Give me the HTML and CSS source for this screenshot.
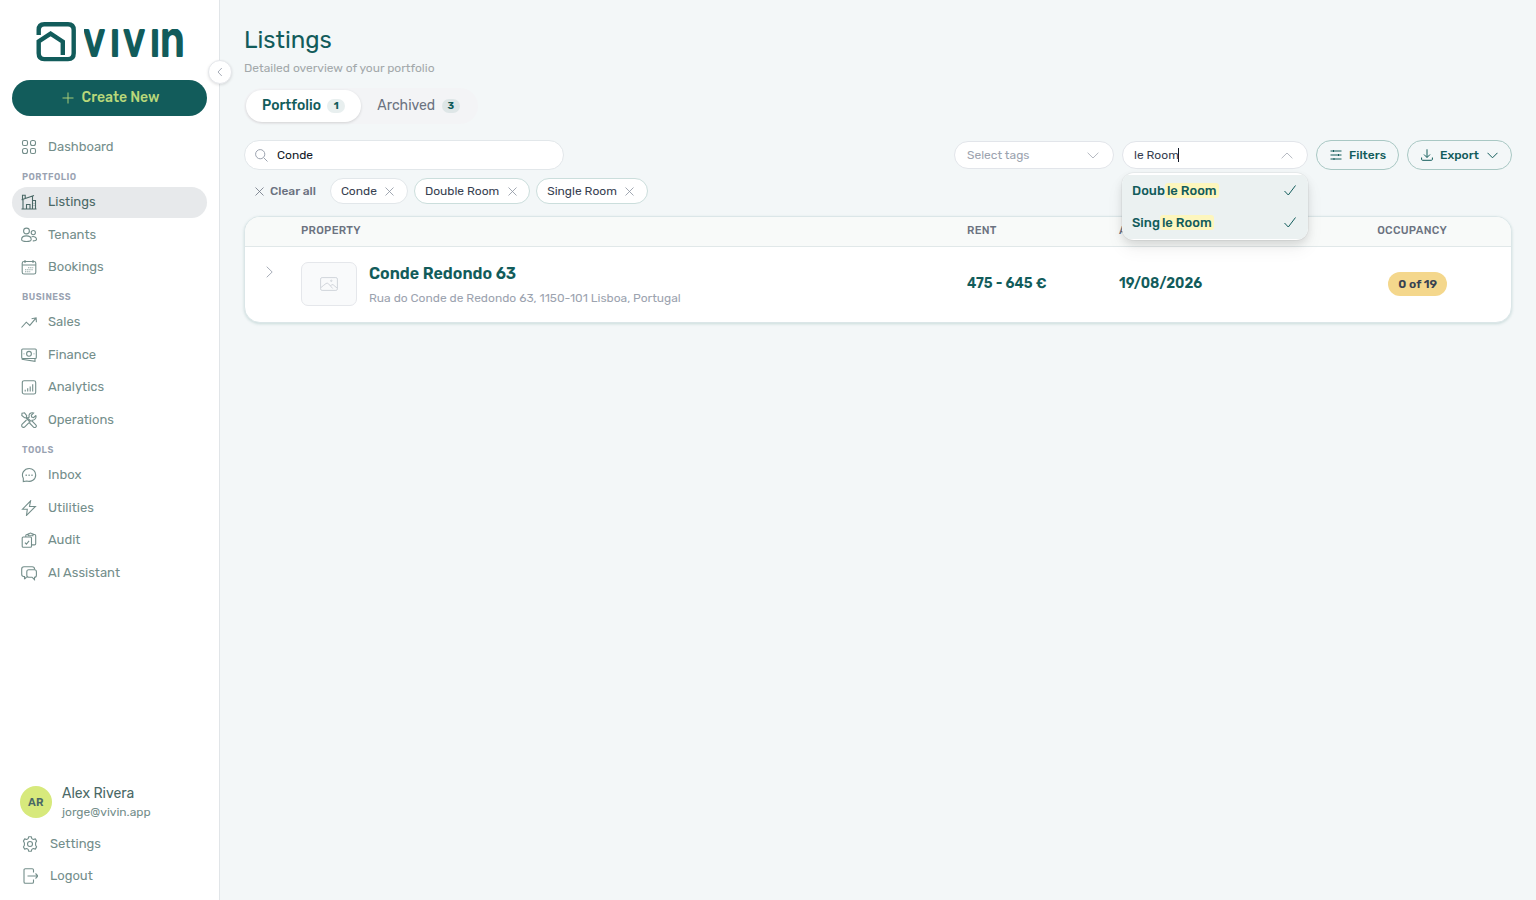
FILE: index.html
```html
<!DOCTYPE html>
<html lang="en">
<head>
<meta charset="utf-8">
<title>Listings</title>
<link rel="stylesheet" href="styles.css">
</head>
<body>
<div class="app">
  <aside class="sidebar">
    <button class="collapse" aria-label="Collapse"><svg width="8" height="10" viewBox="0 0 8 10"><path d="M5.8 1 2 5l3.800 4"/></svg></button>
    <div class="logo">
      <svg class="mark" width="42" height="42" viewBox="0 0 42 42"><path d="M2.700 14V9Q2.700 3.200 8.300 3.200H32Q37.700 3.200 37.700 9V32.300Q37.700 38.100 32 38.100H8.300Q2.700 38.100 2.700 32.300V20.500L14.600 12.700 26.800 20.700V34"/></svg>
      <svg class="wordmark" width="102" height="28" viewBox="0 0 102 28"><text x="-1.900 34.500 52.200 88.500 102.500" y="28" transform="scale(.74 1)">vivin</text></svg>
    </div>
    <button class="create"><svg width="12" height="12" viewBox="0 0 12 12"><path d="M6 .5v11M.5 6h11"/></svg>Create New</button>
    <nav class="nav">
      <a class="item"><svg viewBox="0 0 16 16"><rect x="1.500" y="1.500" width="5" height="5" rx="1.500"/><rect x="9.500" y="1.500" width="5" height="5" rx="2"/><rect x="1.500" y="9.500" width="5" height="5" rx="2"/><rect x="9.500" y="9.500" width="5" height="5" rx="1.500"/></svg>Dashboard</a>
      <div class="label">Portfolio</div>
      <a class="item active"><svg viewBox="0 0 16 16"><path d="M.5 15h15M2 15V5.500M.6 5.800 13 1.500M1.500 5V1.300h2.700v3M11.500 15V2.500M11.500 6.500h3V15M5.500 15v-4.500h3.500V15M13 9v.5M13 11.500v.5"/></svg>Listings</a>
      <a class="item"><svg viewBox="0 0 16 16"><circle cx="5.500" cy="4" r="2.900"/><circle cx="12.300" cy="5.600" r="2.100"/><path d="M.6 12.500C.6 10.300 2.800 8.900 5.400 8.900s4.800 1.400 4.800 3.600c0 1.300-2.100 2-4.800 2s-4.800-.7-4.800-2ZM10.600 9.800c2.400-1 4.900.6 4.900 2.500 0 1-1.500 1.700-3.700 1.600"/></svg>Tenants</a>
      <a class="item"><svg viewBox="0 0 16 16"><rect x="1.200" y="2.500" width="13.600" height="12.500" rx="1.800"/><path d="M1.200 6h13.600M4 1v3M12 1v3"/><path stroke-dasharray="1.100 1" d="M7.200 8.800h5M4.200 10.800h7.500M4.200 12.800h5"/></svg>Bookings</a>
      <div class="label">Business</div>
      <a class="item"><svg viewBox="0 0 16 16"><path d="M.5 13.500 5.300 8.200l3.500 3.200 5.900-7M10.600 4.700l4.500-.9.300 4.500"/></svg>Sales</a>
      <a class="item"><svg viewBox="0 0 16 16"><rect x=".7" y="2" width="14.600" height="9.500" rx="1"/><circle cx="8" cy="6.800" r="2.400"/><path d="M3 6.500v.7M13 6.500v.7M.7 12.300l13.300 2v-2.500"/></svg>Finance</a>
      <a class="item"><svg viewBox="0 0 16 16"><rect x="1.300" y="1.700" width="13.400" height="13.300" rx="1.800"/><path d="M4.200 12.500v-1.800M6.700 12.500V9.300M9.200 12.500V7.600M11.700 12.500V5.200"/></svg>Analytics</a>
      <a class="item"><svg viewBox="0 0 16 16"><path d="M1 1.200 3.500.8l2.200 2.800-.3 1.200 4.200 4.200 1.300-.1 3.900 3.900a1.600 1.600 0 0 1-2.300 2.300L8.700 11.200l.1-1.300-4.200-4.300-1.100.1L.8 3.500ZM14.900 3.300l-2.300 2.300-1.900-.5-.4-1.800L12.600 1c-2.700-1-5.300 1.100-4.400 4L6.900 6.300M5.500 8 1.200 12.200a1.800 1.800 0 0 0 2.600 2.600L8 10.600M10.700 8.100c2.800.6 4.900-1.900 4.200-4.800"/></svg>Operations</a>
      <div class="label">Tools</div>
      <a class="item"><svg viewBox="0 0 16 16"><path d="M2.300 14.600v-3.400C-.2 6.500 3.200 1.500 8.200 1.500c3.700 0 6.500 2.900 6.500 6.400 0 4.700-4.600 7.500-8.900 6.100Z"/><path stroke-width="1.400" d="M4.600 8.200h1.200M7.500 8.200h1.200M10.400 8.200h1.200"/></svg>Inbox</a>
      <a class="item"><svg viewBox="0 0 16 16"><path d="M9.600.8 1.500 9.200h4.800l-.8 6.200L14.400 6.500H8.500Z"/></svg>Utilities</a>
      <a class="item"><svg viewBox="0 0 16 16"><rect x="1.200" y="5" width="9.300" height="10.300" rx="1"/><path d="m3.900 10.600 1.500 1.500 2.700-3.200M4.800 5V3.500q0-1 1-1h1.400M12 2.500h1.500q1.200 0 1.200 1.200v8q0 1.200-1.200 1.200h-3M7.200 3.700v-1.900h1.200q1.100-1.500 2.200 0h1.300v1.900Z"/></svg>Audit</a>
      <a class="item"><svg viewBox="0 0 16 16"><path d="M3.500 14.200V11.500H2.700Q.7 11.500.7 9.300V4Q.7 1.700 3 1.700h8.200q2.300 0 2.500 2.800M3.500 14.200 5.600 12"/><path d="M7.800 4.700h5.600q2 0 2 2v3.500q0 2-1.900 2v2.500L11 12.200H7.800q-2 0-2-2V6.700q0-2 2-2Z"/></svg>AI Assistant</a>
    </nav>
    <div class="account">
      <div class="user">
        <div class="avatar">AR</div>
        <div><div class="name">Alex Rivera</div><div class="email">jorge@vivin.app</div></div>
      </div>
      <a class="item"><svg viewBox="0 0 16 16"><circle cx="8" cy="8" r="2.500"/><path d="M6.700.7h2.600l.5 1.900 1.500.9 2-.6 1.300 2.200-1 1.700v2.400l1 1.700-1.300 2.200-2-.6-1.500.9-.5 1.900H6.700l-.5-1.900-1.500-.9-2 .6L1.400 11l1-1.700V6.900l-1-1.800L2.700 2.900l2 .6 1.500-.9Z" stroke-linejoin="round"/></svg>Settings</a>
      <a class="item"><svg viewBox="0 0 16 16"><path d="M11.500 4.500V2q0-1.300-1.300-1.300H3.300Q2 .7 2 2v12q0 1.300 1.300 1.300h6.900q1.300 0 1.300-1.300v-2.500M5.500 8h10.300M13.500 5.500 16 8l-2.500 2.500"/></svg>Logout</a>
    </div>
  </aside>

  <main class="main">
    <h1>Listings</h1>
    <p class="sub">Detailed overview of your portfolio</p>
    <div class="tabs">
      <div class="tab on">Portfolio<span class="count">1</span></div>
      <div class="tab">Archived<span class="count">3</span></div>
    </div>
    <div class="toolbar">
      <div class="search"><svg width="13" height="13" viewBox="0 0 13 13"><circle cx="5.200" cy="5.200" r="4.600"/><path d="m8.600 8.600 3.900 3.900"/></svg>Conde</div>
      <div class="select tags"><span>Select tags</span><svg width="12" height="7" viewBox="0 0 12 7"><path d="m.6.700 5.400 5.300L11.400.7"/></svg></div>
      <div class="select rooms">
        <span class="typed">le Room</span><svg width="12" height="7" viewBox="0 0 12 7"><path d="M.6 6.300 6 1l5.400 5.300"/></svg>
        <div class="menu">
          <div class="option"><span>Doub</span><mark>le Room</mark><svg width="12" height="11" viewBox="0 0 12 11"><path d="M.5 6 4.300 10 11.500.5"/></svg></div>
          <div class="option"><span>Sing</span><mark>le Room</mark><svg width="12" height="11" viewBox="0 0 12 11"><path d="M.5 6 4.300 10 11.500.5"/></svg></div>
        </div>
      </div>
      <button class="btn filters"><svg width="12" height="12" viewBox="0 0 12 12"><path d="M.5 2h11M.5 6h11M.5 10h11M3.500 1v2M8.500 5v2M4 9v2"/></svg>Filters</button>
      <button class="btn export"><svg width="12" height="12" viewBox="0 0 12 12"><path d="M6 .3v8M3 5.500l3 3 3-3M.6 8.500v1.800q0 1 1 1h8.800q1 0 1-1V8.500"/></svg>Export<svg class="chev" width="11" height="7" viewBox="0 0 11 7"><path d="m.5.800 5 5 5-5"/></svg></button>
    </div>
    <div class="chips">
      <div class="clear"><svg class="x" viewBox="0 0 9 9"><path d="m.5.500 8 8m0-8-8 8"/></svg>Clear all</div>
      <div class="chip plain">Conde<svg class="x" viewBox="0 0 9 9"><path d="m.5.500 8 8m0-8-8 8"/></svg></div>
      <div class="chip">Double Room<svg class="x" viewBox="0 0 9 9"><path d="m.5.500 8 8m0-8-8 8"/></svg></div>
      <div class="chip">Single Room<svg class="x" viewBox="0 0 9 9"><path d="m.5.500 8 8m0-8-8 8"/></svg></div>
    </div>
    <section class="table">
      <div class="row head"><span></span><span>Property</span><span>Rent</span><span>Available</span><span class="end">Occupancy</span></div>
      <div class="row body">
        <svg class="expand" width="7" height="12" viewBox="0 0 7 12"><path d="M.7.700 6.200 6 .7 11.300"/></svg>
        <div class="property">
          <div class="thumb"><svg width="18" height="14" viewBox="0 0 18 14"><rect x=".6" y=".6" width="16.800" height="12.800" rx="1.500"/><path d="M1 10.500Q4 8 6 6.500q1.300-.9 2.500.3l4.200 4.700M10.500 9q1.300-2.300 2.700-1.200L17 11"/><circle cx="11.300" cy="3.800" r=".7"/></svg></div>
          <div><div class="title">Conde Redondo 63</div><div class="address">Rua do Conde de Redondo 63, 1150-101 Lisboa, Portugal</div></div>
        </div>
        <span class="value">475 - 645 €</span>
        <span class="value">19/08/2026</span>
        <span class="end"><span class="badge">0 of 19</span></span>
      </div>
    </section>
  </main>
</div>
</body>
</html>
```
FILE: styles.css
```css
* { box-sizing: border-box; margin: 0; }
body { font-family: Rubik, Roboto, sans-serif; font-size: 12px; color: #374151; background: #f3f7f8; }
svg { flex: none; fill: none; stroke: currentColor; stroke-width: 1; }
button { font: inherit; }
.app { display: flex; width: 1536px; height: 900px; overflow: hidden; }

.sidebar { position: relative; width: 220px; flex: none; padding: 21px 12px 0; background: #fff; border-right: 1px solid #e1e5e8; display: flex; flex-direction: column; }
.collapse { position: absolute; left: 208px; top: 60px; width: 24px; height: 24px; padding: 0; border: 1px solid #e5e7eb; border-radius: 50%; background: #fff; color: #9ca3af; box-shadow: 0 1px 3px rgba(0, 0, 0, .12); display: flex; align-items: center; justify-content: center; }
.collapse svg { stroke-width: .9; }
.logo { display: flex; height: 59px; padding-left: 24px; color: #125c5b; }
.mark { margin-right: 6px; stroke-width: 4.400; }
.wordmark { margin-top: 7.500px; overflow: hidden; }
.wordmark text { font: 600 53.800px Rubik, Roboto, sans-serif; fill: #125c5b; stroke: none; }
.create { height: 36px; flex: none; border: 0; border-radius: 18px; background: #125c5b; color: #b9d87a; font-size: 14px; font-weight: 500; display: flex; align-items: center; justify-content: center; gap: 8px; padding: 0 0 2px 2px; }
.create svg { margin-top: 2px; stroke-width: .9; }
.nav { display: flex; flex-direction: column; gap: 2px; padding-top: 15.750px; }
.item { display: flex; align-items: center; gap: 11px; height: 30.500px; padding: 0 9px .5px 9px; border-radius: 16px; color: #748e8b; font-size: 13px; line-height: 16px; }
.item svg { width: 16px; height: 16px; stroke-width: 1.100; }
.item.active { background: #e7e9eb; color: #4a6866; }
.label { height: 20.750px; padding: 4.500px 10px 0; font-size: 9px; line-height: 17px; font-weight: 600; letter-spacing: .5px; text-transform: uppercase; color: #9aa3b2; }
.account { margin-top: auto; padding: 0 0 8px 1px; display: flex; flex-direction: column; gap: 1.500px; }
.account .item { gap: 12px; padding-bottom: 2.500px; }
.account .item svg { margin-top: 1.500px; }
.user { display: flex; align-items: center; gap: 10px; padding: 0 7px; margin-bottom: 7px; }
.avatar { width: 32px; height: 32px; border-radius: 50%; background: #d7e97c; color: #4a6866; font-size: 11px; font-weight: 600; letter-spacing: .5px; display: flex; align-items: center; justify-content: center; }
.name { padding-top: 1px; font-size: 14px; line-height: 19px; height: 20px; color: #4a6866; }
.email { font-size: 12px; line-height: 18px; color: #748e8b; }

.main { flex: 1; padding: 24px 24px 0; }
h1 { font-size: 24px; line-height: 32px; font-weight: 400; color: #125c5b; }
.sub { margin-top: 4px; line-height: 16px; color: #a3a9ab; }
.tabs { display: inline-flex; height: 36px; margin-top: 12px; padding: 2px; border-radius: 18px; background: #f3f4f6; font-size: 14px; color: #6b7280; }
.tab { display: flex; align-items: center; gap: 6.400px; padding: 0 16px 2px; border-radius: 16px; }
.tab.on { background: #fff; color: #125c5b; font-weight: 500; box-shadow: 0 1px 3px rgba(0, 0, 0, .14); }
.count { min-width: 18px; height: 14px; margin-top: 2px; padding: 0 6px; border-radius: 7px; background: #e8efef; color: #125c5b; font-size: 10px; line-height: 14px; font-weight: 700; text-align: center; }
.tab:not(.on) .count { background: #dee6e7; }

.toolbar { display: flex; align-items: center; gap: 8px; height: 30px; margin-top: 16px; }
.search { width: 320px; height: 30px; margin-right: auto; padding: 0 10px; border: 1px solid #e2e7ea; border-radius: 15px; background: #fff; color: #111827; display: flex; align-items: center; gap: 9px; }
.search svg { color: #9ca3af; }
.select { position: relative; height: 28px; border: 1px solid #e2e5ea; border-radius: 14px; background: #fff; display: flex; align-items: center; justify-content: space-between; }
.select > svg { color: #b6bac2; }
.tags { width: 160px; padding: 0 14px 0 12px; color: #9ca3af; }
.rooms { width: 186px; padding: 0 14px 0 11px; }
.typed { width: 45px; border-right: 1px solid #111827; line-height: 14px; white-space: nowrap; }
.menu { position: absolute; z-index: 2; left: -1px; top: 31px; width: 186px; height: 67px; padding: 2px 0 1px; border-radius: 12px; background: #fff; overflow: hidden; box-shadow: 0 0 0 1px rgba(0, 0, 0, .04), 0 4px 8px rgba(0, 0, 0, .1), 0 9px 18px rgba(0, 0, 0, .06); }
.option { display: flex; align-items: center; height: 32px; padding: 0 12px 2px 10px; background: #ebf1f1; color: #125c5b; font-size: 13px; font-weight: 500; }
.option mark { padding: 0 2px; border-radius: 3px; background: #fdf6bd; color: inherit; line-height: 15px; }
.option svg { margin-left: auto; }
.btn { height: 30px; border: 1px solid #a9c8c4; border-radius: 15px; background: transparent; color: #125c5b; font-weight: 500; display: flex; align-items: center; padding: 0 12px 0 13px; gap: 7px; }
.filters { width: 83px; }
.export { width: 105px; }
.chev { margin-left: 1px; }

.chips { display: flex; align-items: center; gap: 6px; height: 26px; margin-top: 8px; }
.x { width: 9px; height: 9px; stroke-width: .8; }
.clear { display: flex; align-items: center; gap: 6.500px; padding: 0 8px 0 10.500px; color: #6b7280; font-weight: 500; }
.chip { display: flex; align-items: center; gap: 8.500px; height: 26px; padding: 0 12.500px 0 10px; border: 1px solid #cbdedc; border-radius: 13px; background: #fff; }
.chip.plain { border-color: #e2e7ea; }
.chip .x { color: #8c93a0; }

.table { height: 107px; margin-top: 12px; border: 1px solid #dbe6e8; border-radius: 16px; background: #fff; overflow: hidden; box-shadow: 0 1px 3px rgba(18, 92, 91, .18); }
.row { display: grid; grid-template-columns: 56px 666px 152px 216px 112px; }
.head { height: 30px; padding-top: 7px; border-bottom: 1px solid #e1e8e9; background: #f8faf9; color: #6b7280; font-size: 11px; line-height: 14px; font-weight: 500; letter-spacing: .28px; text-transform: uppercase; }
.end { text-align: right; }
.body { height: 75px; }
.expand { margin: 19px 0 0 20.500px; color: #a7adb8; }
.property { display: flex; gap: 12px; padding-top: 15px; }
.thumb { width: 56px; height: 44px; border: 1px solid #e5e7eb; border-radius: 7px; background: #f9fafb; color: #d1d5db; display: flex; align-items: center; justify-content: center; }
.title { margin-top: 1px; font-size: 16px; line-height: 22px; font-weight: 600; color: #125c5b; }
.address { margin-top: 5px; line-height: 16px; color: #9ca3af; }
.value { padding-top: 27px; font-size: 14px; line-height: 20px; font-weight: 600; color: #125c5b; }
.badge { display: inline-block; height: 24px; margin-top: 25px; padding: 0 10px; border-radius: 12px; background: #f4d78c; color: #374151; font-weight: 600; line-height: 24px; }
```
